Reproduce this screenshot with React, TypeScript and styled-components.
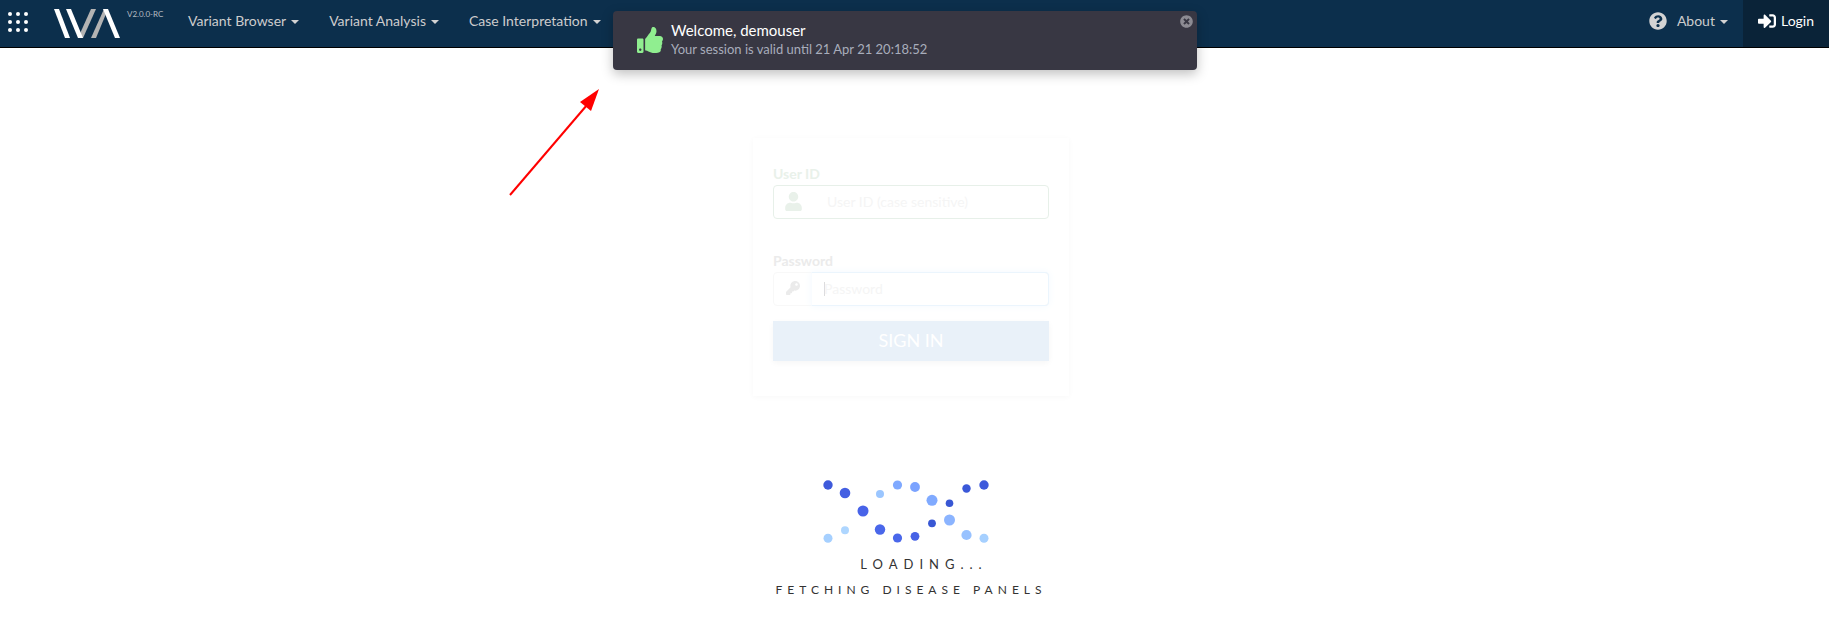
import React from "react";
import styled, { createGlobalStyle } from "styled-components";
import {
  FaKey,
  FaQuestionCircle,
  FaSignInAlt,
  FaThumbsUp,
  FaTimesCircle,
  FaUser,
} from "react-icons/fa";

const GlobalStyle = createGlobalStyle`
  *, *::before, *::after { box-sizing: border-box; }
  body {
    margin: 0;
    background: #fff;
    color: #333;
    font-family: Lato, "Liberation Sans", sans-serif;
    font-size: 14px;
    line-height: 20px;
  }
  button, input { font: inherit; }
`;

const Page = styled.div`
  position: relative;
`;

const Navbar = styled.nav`
  display: flex;
  justify-content: space-between;
  height: 48px;
  background: #0c2f4c;
  border-bottom: 1px solid #000;
`;

const NavGroup = styled.div`
  display: flex;
  align-items: stretch;
`;

const AppsButton = styled.button`
  display: flex;
  align-items: center;
  padding: 0 8px 3px;
  border: 0;
  background: none;
  cursor: pointer;
`;

const Brand = styled.a`
  display: flex;
  align-items: flex-start;
  gap: 7px;
  width: 137px;
  padding: 9px 0 0 18px;
  color: #b5bbc1;
  font-size: 8px;
  line-height: 10px;
  text-decoration: none;
  white-space: nowrap;
`;

const NavButton = styled.button<{ $active?: boolean; $gap?: number }>`
  display: flex;
  align-items: center;
  gap: ${(p) => p.$gap ?? 5}px;
  padding: 0 15px 5px;
  border: 0;
  background: ${(p) => (p.$active ? "#0a2338" : "none")};
  color: ${(p) => (p.$active ? "#fff" : "#ccc")};
  white-space: nowrap;
  cursor: pointer;
`;

const Caret = styled.span`
  margin-top: 2px;
  border: 4px solid transparent;
  border-top-color: #d3d3d3;
  border-bottom-width: 0;
`;

const HelpIcon = styled(FaQuestionCircle)`
  width: 18px;
  height: 18px;
  margin-right: 5px;
  color: #d3d3d3;
`;

const Toast = styled.div`
  position: absolute;
  top: 11px;
  left: 0;
  right: 19px;
  display: flex;
  align-items: center;
  gap: 8px;
  width: 584px;
  max-width: 90%;
  height: 59px;
  margin: 0 auto;
  padding: 0 24px 2px;
  border-radius: 4px;
  background: #383743;
  box-shadow: 0 4px 12px rgba(0, 0, 0, 0.25);
`;

const ToastIcon = styled(FaThumbsUp)`
  flex: none;
  width: 26px;
  height: 26px;
  color: #90ee90;
`;

const ToastText = styled.div`
  padding-bottom: 1px;
`;

const ToastTitle = styled.div`
  color: #fff;
  font-size: 15px;
  line-height: 20px;
`;

const ToastMessage = styled.div`
  color: #a8adbb;
  font-size: 13px;
  line-height: 18px;
`;

const ToastClose = styled.button`
  position: absolute;
  top: 4px;
  right: 4px;
  display: flex;
  padding: 0;
  border: 0;
  background: none;
  color: #8c8b93;
  cursor: pointer;
`;

const Arrow = styled.svg`
  position: absolute;
  top: 88px;
  left: 508px;
  pointer-events: none;
`;

const Main = styled.main`
  display: flex;
  flex-direction: column;
  align-items: center;
  padding: 90px 7px 24px 0;
`;

const LoginForm = styled.form`
  width: 316px;
  padding: 26px 20px 35px;
  box-shadow: 0 1px 6px rgba(0, 0, 0, 0.03);
`;

const Field = styled.div<{ $gap: number }>`
  margin-bottom: ${(p) => p.$gap}px;
`;

const Label = styled.label<{ $color: string }>`
  display: block;
  padding-bottom: 1px;
  color: ${(p) => p.$color};
  font-weight: 700;
`;

const InputGroup = styled.div<{ $border: string }>`
  display: flex;
  height: 34px;
  border: 1px solid ${(p) => p.$border};
  border-radius: 4px;
  background: #fff;
`;

const Addon = styled.span<{ $color: string }>`
  display: flex;
  align-items: center;
  justify-content: center;
  width: 38px;
  padding-bottom: 2px;
  color: ${(p) => p.$color};
`;

const Input = styled.input<{ $focus?: boolean }>`
  flex: 1;
  min-width: 0;
  margin: -1px;
  padding: 0 12px 1px ${(p) => (p.$focus ? 0 : 15)}px;
  border: 1px solid transparent;
  border-radius: 0 4px 4px 0;
  outline: 0;
  background: transparent;
  &::placeholder { color: #f5f5f5; opacity: 1; }
`;

const FocusBox = styled.div`
  display: flex;
  align-items: center;
  flex: 1;
  min-width: 0;
  margin: -1px;
  padding-left: 12px;
  border: 1px solid #ebf5fd;
  border-left-color: #f9fcff;
  border-radius: 0 4px 4px 0;
  box-shadow: 0 0 8px #f3f9fe;
`;

const TextCursor = styled.span`
  width: 1px;
  height: 14px;
  margin-right: -1px;
  background: #dcdcdc;
`;

const SignIn = styled.button`
  display: block;
  width: 100%;
  height: 40px;
  padding: 0 0 2px;
  border: 0;
  background: #e9f1f9;
  box-shadow: 0 2px 6px rgba(0, 0, 0, 0.04);
  color: #fff;
  font-size: 18px;
  cursor: pointer;
`;

const Loader = styled.section`
  display: flex;
  flex-direction: column;
  align-items: center;
  padding-top: 80px;
  text-transform: uppercase;
`;

const Helix = styled.svg`
  display: block;
  margin-right: 10px;
`;

const LoadingTitle = styled.div`
  padding: 5px 0 0 26px;
  font-size: 13px;
  line-height: 26px;
  letter-spacing: 6px;
`;

const LoadingStep = styled.div`
  font-size: 12px;
  line-height: 26px;
  letter-spacing: 5px;
`;

const helixDots: [number, number, number, string][] = [
  [8, 8, 4.7, "#3e5adb"],
  [25, 16, 5.3, "#445fe2"],
  [43, 34, 5.5, "#4863e8"],
  [60, 52.5, 5.2, "#4a67ea"],
  [77.5, 61, 4.6, "#4a67ea"],
  [95, 59.3, 4.4, "#4763e6"],
  [112, 46.3, 3.9, "#3857d4"],
  [129.5, 26.3, 3.8, "#3857d4"],
  [146.5, 11.5, 4.2, "#3a58d8"],
  [164, 8, 4.7, "#3e5adb"],
  [8, 61.3, 4.5, "#a6d0ff"],
  [25, 53.3, 4, "#aed6ff"],
  [60, 17, 4, "#9bc6ff"],
  [77.5, 8, 4.6, "#7fa9ff"],
  [95, 10, 4.9, "#7ba3ff"],
  [112, 23.3, 5.5, "#80aaff"],
  [129.5, 43, 5.5, "#8bb4ff"],
  [146.5, 58, 5.1, "#98c2ff"],
  [164, 61.3, 4.5, "#a6d0ff"],
];

const menus = ["Variant Browser", "Variant Analysis", "Case Interpretation"];

export default function App() {
  return (
    <Page>
      <GlobalStyle />
      <Navbar>
        <NavGroup>
          <AppsButton aria-label="Applications">
            <svg width="20" height="20" viewBox="0 0 20 20" fill="#fff">
              {[2, 10, 18].map((y) =>
                [2, 10, 18].map((x) => <circle key={`${x}-${y}`} cx={x} cy={y} r="2" />)
              )}
            </svg>
          </AppsButton>
          <Brand href="#home" aria-label="IVA V2.0.0-RC">
            <svg width="66" height="29" viewBox="0 0 66 29">
              <path d="M37 0h5L29 29h-5z" fill="#b3b3b3" />
              <path d="M50 0h4L42 29h-5z" fill="#b3b3b3" />
              <path d="M0 0h5l11 29h-5z" fill="#fff" />
              <path d="M12 0h5l12 29h-5z" fill="#fff" />
              <path d="M49 0h5l12 29h-5z" fill="#fff" />
            </svg>
            V2.0.0-RC
          </Brand>
          {menus.map((menu) => (
            <NavButton key={menu}>
              {menu}
              <Caret />
            </NavButton>
          ))}
        </NavGroup>
        <NavGroup>
          <NavButton>
            <HelpIcon />
            About
            <Caret />
          </NavButton>
          <NavButton $active>
            <FaSignInAlt size={18} />
            Login
          </NavButton>
        </NavGroup>
      </Navbar>

      <Main>
        <LoginForm onSubmit={(e) => e.preventDefault()}>
          <Field $gap={32}>
            <Label htmlFor="user" $color="#e9f1ea">User ID</Label>
            <InputGroup $border="#e7f0e9">
              <Addon $color="#e9f1ea">
                <FaUser size={19} />
              </Addon>
              <Input id="user" placeholder="User ID (case sensitive)" />
            </InputGroup>
          </Field>
          <Field $gap={15}>
            <Label htmlFor="password" $color="#ebebeb">Password</Label>
            <InputGroup $border="#f8f8f8">
              <Addon $color="#ebebeb">
                <FaKey size={14} />
              </Addon>
              <FocusBox>
                <TextCursor />
                <Input id="password" type="password" placeholder="Password" $focus />
              </FocusBox>
            </InputGroup>
          </Field>
          <SignIn type="submit">SIGN IN</SignIn>
        </LoginForm>

        <Loader aria-live="polite">
          <Helix width="172" height="70" viewBox="0 0 172 70" aria-hidden="true">
            {helixDots.map(([x, y, r, fill]) => (
              <circle key={`${x}-${y}`} cx={x} cy={y + 1} r={r} fill={fill} />
            ))}
          </Helix>
          <LoadingTitle>Loading...</LoadingTitle>
          <LoadingStep>Fetching disease panels</LoadingStep>
        </Loader>
      </Main>

      <Toast role="status">
        <ToastIcon />
        <ToastText>
          <ToastTitle>Welcome, demouser</ToastTitle>
          <ToastMessage>Your session is valid until 21 Apr 21 20:18:52</ToastMessage>
        </ToastText>
        <ToastClose aria-label="Close">
          <FaTimesCircle size={13} />
        </ToastClose>
      </Toast>

      <Arrow width="92" height="110" viewBox="0 0 92 110" aria-hidden="true">
        <path d="M2 107L79 17" stroke="#f00" strokeWidth="2" />
        <path d="M91 1L72 14L83 23z" fill="#f00" />
      </Arrow>
    </Page>
  );
}
